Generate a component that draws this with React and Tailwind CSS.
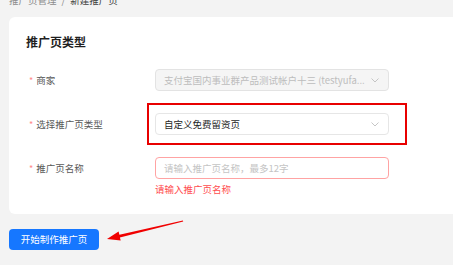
import React from "react";

const font = { fontFamily: '"Noto Sans CJK SC", "Noto Sans", sans-serif' };

function Chevron() {
  return (
    <svg width="8" height="5" viewBox="0 0 8 5" className="shrink-0">
      <path d="M0.5 0.5 L4 4 L7.5 0.5" fill="none" stroke="#c0c0c0" strokeWidth="0.9" />
    </svg>
  );
}

function Label({ children }) {
  return (
    <div className="w-[129px] shrink-0 flex items-center h-[22px] text-[9.5px] text-[#595959]">
      <span className="ml-[3px] mr-[3px] text-[#ff8a8a] text-[9px] leading-none">*</span>
      <span>{children}</span>
    </div>
  );
}

export default function App() {
  return (
    <div className="relative w-[453px] h-[265px] overflow-hidden bg-[#f3f3f3]" style={font}>
      {/* breadcrumb */}
      <div className="pl-[9px] -mt-[7px] h-[14px] flex items-center text-[9.5px] leading-[14px]">
        <span className="text-[#8c8c8c]">推广页管理</span>
        <span className="mx-[5px] text-[#8c8c8c]">/</span>
        <span className="text-[#404040]">新建推广页</span>
      </div>

      {/* card */}
      <div className="ml-[9px] mt-[10px] w-[460px] bg-white rounded-[6px] pt-[16px] pb-[19px] pl-[17px]">
        <div className="text-[12px] leading-[18px] font-bold text-[#1f1f1f]">推广页类型</div>

        <div className="mt-[18px] flex flex-col gap-[22px]">
          {/* row 1 */}
          <div className="flex">
            <Label>商家</Label>
            <div className="w-[234px] h-[22px] flex items-center justify-between pl-[8px] pr-[9px] rounded-[4px] border border-[#e3e3e3] bg-[#f5f5f5]">
              <span className="text-[9.5px] text-[#bdbdbd] whitespace-nowrap overflow-hidden">
                支付宝国内事业群产品测试帐户十三 (testyufa...
              </span>
              <Chevron />
            </div>
          </div>

          {/* row 2 */}
          <div className="flex">
            <Label>选择推广页类型</Label>
            <div className="relative w-[234px] h-[22px]">
              <div className="absolute -left-[8px] -right-[18px] -top-[10px] -bottom-[10px] border-2 border-[#e80000]" />
              <div className="w-full h-full flex items-center justify-between pl-[8px] pr-[9px] rounded-[4px] border border-[#e6e6e6] bg-white">
                <span className="text-[9.5px] text-[#262626] whitespace-nowrap">自定义免费留资页</span>
                <Chevron />
              </div>
            </div>
          </div>

          {/* row 3 */}
          <div className="flex">
            <Label>推广页名称</Label>
            <div className="w-[234px]">
              <div className="h-[22px] flex items-center pl-[8px] rounded-[4px] border border-[#ffa3a3] bg-white">
                <span className="text-[9.5px] text-[#c4c4c4] whitespace-nowrap">请输入推广页名称，最多12字</span>
              </div>
              <div className="mt-[4px] text-[9.5px] leading-[12px] text-[#ff4d4f]">请输入推广页名称</div>
            </div>
          </div>
        </div>
      </div>

      {/* button */}
      <div className="ml-[9px] mt-[15px]">
        <button className="w-[90px] h-[21px] rounded-[4px] bg-[#1677ff] text-white text-[9.5px] flex items-center justify-center" style={font}>
          开始制作推广页
        </button>
      </div>

      {/* arrow annotation */}
      <svg className="absolute inset-0 pointer-events-none" width="453" height="265" viewBox="0 0 453 265">
        <polygon
          points="107,239 118.6,231.6 119.4,234.8 182.9,220.4 183.2,221.4 119.9,237.4 120.7,240.6"
          fill="#f00000"
        />
      </svg>
    </div>
  );
}
